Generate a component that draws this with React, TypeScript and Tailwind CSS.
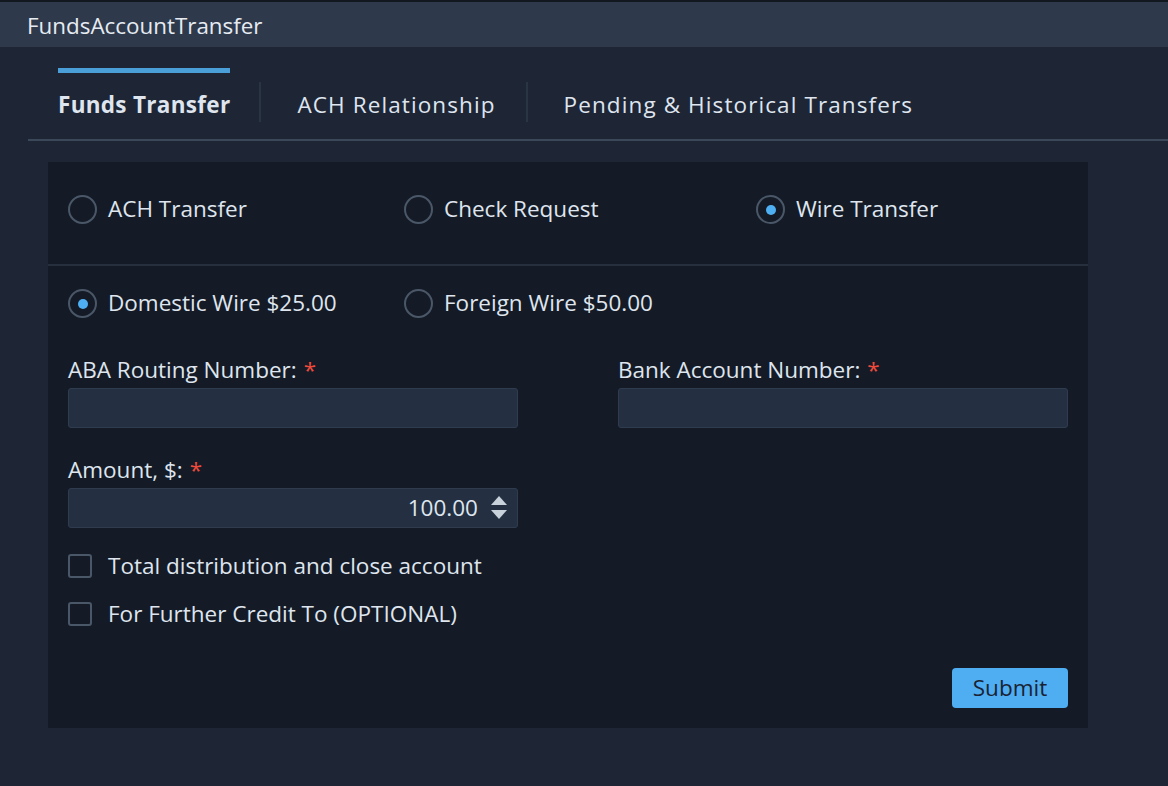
import { useState } from 'react';

const font = { fontFamily: '"Open Sans", "Noto Sans", sans-serif' };

function Radio({ checked, label, onClick }: { checked: boolean; label: string; onClick?: () => void }) {
  return (
    <button type="button" onClick={onClick} className="flex items-center gap-[11px] text-left">
      <span className="flex h-[29px] w-[29px] shrink-0 items-center justify-center rounded-full border-2 border-[#4a5768]">
        {checked && <span className="h-[10px] w-[10px] rounded-full bg-[#4eb0f2]" />}
      </span>
      <span className="text-[22.5px] leading-none text-[#dfe5ee]">{label}</span>
    </button>
  );
}

function Checkbox({ label }: { label: string }) {
  const [on, setOn] = useState(false);
  return (
    <button type="button" onClick={() => setOn(!on)} className="flex items-center gap-[16px] text-left">
      <span className="flex h-[24px] w-[24px] shrink-0 items-center justify-center rounded-[3px] border-2 border-[#4a5768]">
        {on && <span className="h-[10px] w-[10px] bg-[#4eb0f2]" />}
      </span>
      <span className="text-[22.5px] leading-none text-[#dfe5ee]">{label}</span>
    </button>
  );
}

function Field({ label, children }: { label: string; children?: React.ReactNode }) {
  return (
    <div className="flex w-[450px] flex-col">
      <div className="flex h-[30px] items-center text-[22.5px] leading-none text-[#dfe5ee]">
        {label}
        <span className="ml-[7px] text-[#ef4a3c]">*</span>
      </div>
      <div className="mt-[3px] flex h-[40px] items-center rounded-[3px] border border-[#2f3c4f] bg-[#243042] px-3">
        {children}
      </div>
    </div>
  );
}

export default function App() {
  const [method, setMethod] = useState('wire');
  const [wire, setWire] = useState('domestic');

  return (
    <div className="min-h-[786px] w-full bg-[#1e2636]" style={font}>
      <div className="h-[2px] bg-[#121820]" />
      <div className="flex h-[45px] items-center bg-[#2e3a4c] pl-[27px] pt-[3px] text-[22.4px] text-[#e6ebf2]">
        FundsAccountTransfer
      </div>

      <div className="ml-[28px]">
        <div className="flex items-stretch border-b-2 border-[#3b4859] pl-[30px]">
          <div className="flex flex-col pt-[21px]">
            <div className="h-[5px] bg-[#4a9fd8]" />
            <div className="flex h-[66px] items-center pb-[2px] text-[22.5px] font-bold tracking-[0.3px] text-[#dfe5ee]">
              Funds Transfer
            </div>
          </div>
          <div className="ml-[29px] mr-[36px] mt-[35px] h-[40px] w-[2px] bg-[#2a3544]" />
          <div className="flex items-center pt-[26px] text-[22.5px] tracking-[1.1px] text-[#dfe5ee]">
            <span className="relative top-[-1px]">ACH Relationship</span>
          </div>
          <div className="ml-[30px] mr-[36px] mt-[35px] h-[40px] w-[2px] bg-[#2a3544]" />
          <div className="flex items-center pt-[26px] text-[22.5px] tracking-[1.1px] text-[#dfe5ee]">
            <span className="relative top-[-1px]">Pending &amp; Historical Transfers</span>
          </div>
        </div>

        <div className="ml-[20px] mt-[21px] w-[1040px] bg-[#151b26]">
          <div className="flex h-[104px] border-b-2 border-[#252f3d] px-[20px] pt-[33px]">
            <div className="w-[336px]">
              <Radio checked={method === 'ach'} label="ACH Transfer" onClick={() => setMethod('ach')} />
            </div>
            <div className="w-[352px]">
              <Radio checked={method === 'check'} label="Check Request" onClick={() => setMethod('check')} />
            </div>
            <div>
              <Radio checked={method === 'wire'} label="Wire Transfer" onClick={() => setMethod('wire')} />
            </div>
          </div>

          <div className="px-[20px] pb-[20px]">
            <div className="flex pt-[23px]">
              <div className="w-[336px]">
                <Radio checked={wire === 'domestic'} label="Domestic Wire $25.00" onClick={() => setWire('domestic')} />
              </div>
              <div>
                <Radio checked={wire === 'foreign'} label="Foreign Wire $50.00" onClick={() => setWire('foreign')} />
              </div>
            </div>

            <div className="mt-[37px] flex justify-between">
              <Field label="ABA Routing Number:" />
              <Field label="Bank Account Number:" />
            </div>

            <div className="mt-[27px]">
              <Field label="Amount, $:">
                <span className="ml-auto text-[22.5px] text-[#dfe5ee]">100.00</span>
                <svg width="18" height="26" viewBox="0 0 18 26" className="ml-[12px] mr-[-3px]">
                  <path d="M9 1 L17 10 L1 10 Z" fill="#c9d1db" />
                  <path d="M1 15 L17 15 L9 24 Z" fill="#c9d1db" />
                </svg>
              </Field>
            </div>

            <div className="mt-[26px] flex flex-col gap-[24px]">
              <Checkbox label="Total distribution and close account" />
              <Checkbox label="For Further Credit To (OPTIONAL)" />
            </div>

            <div className="mt-[42px] flex justify-end">
              <button
                type="button"
                className="h-[40px] w-[116px] rounded-[4px] bg-[#4fadf2] text-[22.5px] text-[#1a2333]"
              >
                Submit
              </button>
            </div>
          </div>
        </div>
      </div>
    </div>
  );
}
